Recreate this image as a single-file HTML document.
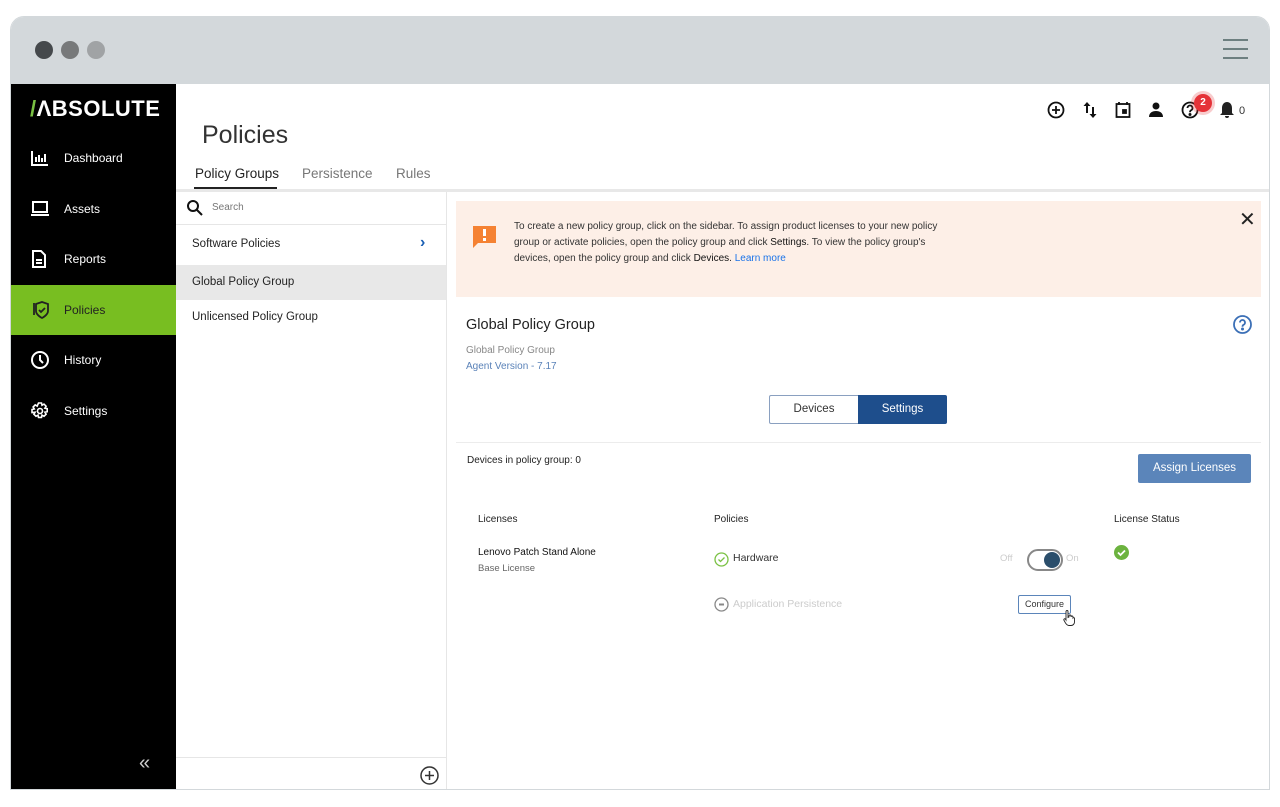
<!DOCTYPE html>
<html><head><meta charset="utf-8"><style>
*{box-sizing:border-box;margin:0;padding:0}
body{width:1280px;height:807px;background:#fff;font-family:"Liberation Sans",sans-serif;position:relative;overflow:hidden;color:#222}
.frame{position:absolute;left:10px;top:16px;width:1260px;height:774px;border:1px solid #d3d8db;border-radius:14px 14px 0 0;overflow:hidden;background:#fff}
.top{position:absolute;left:0;top:0;width:100%;height:67px;background:#d3d8db}
.dot{position:absolute;top:24px;width:18px;height:18px;border-radius:50%}
.ham{position:absolute;left:1212px;width:25px;height:2px;background:#6d7f80}
.side{position:absolute;left:0;top:67px;width:165px;height:707px;background:#000}
.logo{position:absolute;left:19px;top:12px;color:#fff;font-weight:bold;font-size:22px;letter-spacing:0.5px}
.logo b{color:#7ac143}
.nav{position:absolute;left:0;width:165px;height:50px;color:#fff;font-size:12px;display:flex;align-items:center}
.nav svg{position:absolute;left:20px}
.nav span{position:absolute;left:53px}
.nav.act{background:#78be21;color:#222}
.abs{position:absolute}
.s{font-size:11px}
</style></head><body>
<div class="frame">
<div class="top">
<div class="dot" style="left:24px;background:#45494c"></div>
<div class="dot" style="left:50px;background:#77797a"></div>
<div class="dot" style="left:76px;background:#a0a3a5"></div>
<div class="ham" style="top:22px"></div><div class="ham" style="top:31px"></div><div class="ham" style="top:40px"></div>
</div>
<div class="side">
<div class="logo"><b>/</b>ΛBSOLUTE</div>
<div class="nav" style="top:49px"><svg width="18" height="16" viewBox="0 0 18 16" fill="none" stroke="#fff" stroke-width="2"><path d="M1 1v14h16"/><path d="M5 12V7M8 12V5M11 12V8M14 12V4"/></svg><span>Dashboard</span></div>
<div class="nav" style="top:100px"><svg width="18" height="16" viewBox="0 0 18 16" fill="none" stroke="#fff" stroke-width="2"><rect x="2" y="1" width="14" height="10"/><path d="M0 14h18"/></svg><span>Assets</span></div>
<div class="nav" style="top:150px"><svg width="16" height="18" viewBox="0 0 16 18" fill="none" stroke="#fff" stroke-width="2"><path d="M2 1h8l4 4v12H2z"/><path d="M5 10h6M5 13h6"/></svg><span>Reports</span></div>
<div class="nav act" style="top:201px"><svg width="18" height="18" viewBox="0 0 18 18" fill="none" stroke="#222" stroke-width="1.8"><path d="M3 2v12M5 3l6-2 6 2v7c0 4-6 7-6 7s-6-3-6-7z"/><path d="M8 9l2 2 4-4"/></svg><span>Policies</span></div>
<div class="nav" style="top:251px"><svg width="18" height="18" viewBox="0 0 18 18" fill="none" stroke="#fff" stroke-width="2"><circle cx="9" cy="9" r="8"/><path d="M9 4v5l3 3"/></svg><span>History</span></div>
<div class="nav" style="top:302px"><svg width="18" height="18" viewBox="0 0 18 18" fill="none" stroke="#fff" stroke-width="1.6"><circle cx="9" cy="9" r="2.5"/><path d="M7.5 1h3l.5 2.3 2-1.2 2.1 2.1-1.2 2 2.3.5v3l-2.3.5 1.2 2-2.1 2.1-2-1.2-.5 2.3h-3l-.5-2.3-2 1.2-2.1-2.1 1.2-2L1 10.5v-3l2.3-.5-1.2-2 2.1-2.1 2 1.2z"/></svg><span>Settings</span></div>
<div class="abs" style="left:128px;top:668px;color:#ccc;font-size:20px">«</div>
</div>
<!-- header -->
<div class="abs" style="left:191px;top:104px;font-size:25px;color:#333">Policies</div>
<div class="abs" style="left:184px;top:149px;font-size:13.5px;color:#222">Policy Groups</div>
<div class="abs" style="left:183px;top:170px;width:83px;height:3px;background:#222"></div>
<div class="abs" style="left:291px;top:149px;font-size:13.5px;color:#777">Persistence</div>
<div class="abs" style="left:385px;top:149px;font-size:13.5px;color:#777">Rules</div>
<div class="abs" style="left:165px;top:172px;width:1095px;height:3px;background:#e8e8e8"></div>
<!-- top icons -->
<svg class="abs" style="left:1036px;top:84px" width="18" height="18" viewBox="0 0 18 18" fill="none" stroke="#111" stroke-width="1.8"><circle cx="9" cy="9" r="7.5"/><path d="M9 5v8M5 9h8"/></svg>
<svg class="abs" style="left:1072px;top:84px" width="14" height="18" viewBox="0 0 14 18" fill="#111"><path d="M4 1l-3.5 4h2.5v7h2V5h2.5z"/><path d="M10 17l3.5-4H11V6H9v7H6.5z"/></svg>
<svg class="abs" style="left:1104px;top:84px" width="16" height="18" viewBox="0 0 16 18" fill="none" stroke="#111" stroke-width="1.8"><rect x="1.5" y="3" width="13" height="13"/><path d="M4 1v3M12 1v3"/><rect x="8" y="9" width="3" height="3" fill="#111"/></svg>
<svg class="abs" style="left:1138px;top:85px" width="14" height="15" viewBox="0 0 14 15" fill="#111"><circle cx="7" cy="4" r="3.5"/><path d="M0 15c0-4 3-6 7-6s7 2 7 6z"/></svg>
<svg class="abs" style="left:1170px;top:84px" width="18" height="18" viewBox="0 0 18 18" fill="none" stroke="#111" stroke-width="1.8"><circle cx="9" cy="9" r="7.5"/><path d="M6.5 7a2.5 2.5 0 1 1 3.5 2.3c-1 .5-1 1-1 2"/><circle cx="9" cy="13.5" r=".6" fill="#111"/></svg>
<div class="abs" style="left:1183px;top:77px;width:18px;height:18px;border-radius:50%;background:#e53238;box-shadow:0 0 0 3px rgba(229,50,56,.25);color:#fff;font-size:10px;font-weight:bold;text-align:center;line-height:18px">2</div>
<svg class="abs" style="left:1208px;top:84px" width="16" height="18" viewBox="0 0 16 18" fill="#222"><path d="M8 1c3 0 5 2.5 5 6v5l2 2H1l2-2V7c0-3.5 2-6 5-6z"/><path d="M6 15h4a2 2 0 0 1-4 0z"/></svg>
<div class="abs s" style="left:1228px;top:88px;color:#333">0</div>
<!-- middle list -->
<div class="abs" style="left:435px;top:175px;width:1px;height:599px;background:#e6e6e6"></div>
<svg class="abs" style="left:175px;top:182px" width="17" height="17" viewBox="0 0 17 17" fill="none" stroke="#111" stroke-width="2"><circle cx="7" cy="7" r="5"/><path d="M11 11l5 5"/></svg>
<div class="abs" style="left:201px;top:185px;font-size:10px;color:#777">Search</div>
<div class="abs" style="left:165px;top:207px;width:270px;height:1px;background:#e6e6e6"></div>
<div class="abs s" style="left:181px;top:221px;font-size:11.5px">Software Policies</div>
<div class="abs" style="left:409px;top:217px;color:#1a5fb4;font-size:16px;font-weight:bold">›</div>
<div class="abs" style="left:165px;top:248px;width:270px;height:35px;background:#e8e8e8"></div>
<div class="abs" style="left:181px;top:259px;font-size:11.5px">Global Policy Group</div>
<div class="abs" style="left:181px;top:294px;font-size:11.5px">Unlicensed Policy Group</div>
<div class="abs" style="left:165px;top:740px;width:270px;height:1px;background:#e6e6e6"></div>
<svg class="abs" style="left:409px;top:749px" width="19" height="19" viewBox="0 0 19 19" fill="none" stroke="#333" stroke-width="1.5"><circle cx="9.5" cy="9.5" r="8.5"/><path d="M9.5 5v9M5 9.5h9"/></svg>
<!-- banner -->
<div class="abs" style="left:445px;top:184px;width:805px;height:96px;background:#fdefe7"></div>
<svg class="abs" style="left:461px;top:208px" width="25" height="25" viewBox="0 0 25 25"><path d="M1 1h23v17H6l-5 5z" fill="#f58233"/><rect x="11" y="4" width="3" height="7" fill="#fff"/><rect x="11" y="13" width="3" height="3" fill="#fff"/></svg>
<div class="abs" style="left:503px;top:202px;width:440px;font-size:10px;line-height:16px;color:#333">To create a new policy group, click on the sidebar. To assign product licenses to your new policy group or activate policies, open the policy group and click <b style="font-weight:normal;color:#111">Settings</b>. To view the policy group's devices, open the policy group and click <span style="color:#111">Devices</span>. <span style="color:#1a73e8">Learn more</span></div>
<div class="abs" style="left:1228px;top:190px;font-size:20px;color:#222">✕</div>
<div class="abs" style="left:455px;top:300px;font-size:14.5px;color:#222">Global Policy Group</div>
<svg class="abs" style="left:1222px;top:298px" width="19" height="19" viewBox="0 0 19 19" fill="none" stroke="#3b6fb6" stroke-width="1.8"><circle cx="9.5" cy="9.5" r="8.5"/><path d="M7 7.5a2.5 2.5 0 1 1 3.5 2.3c-1 .5-1 1-1 2"/><circle cx="9.5" cy="14" r=".6" fill="#3b6fb6"/></svg>
<div class="abs" style="left:455px;top:328px;font-size:10px;color:#888">Global Policy Group</div>
<div class="abs" style="left:455px;top:344px;font-size:10px;color:#5a82b8">Agent Version - 7.17</div>
<div class="abs" style="left:758px;top:378px;width:89px;height:29px;border:1px solid #8aa0c0;border-right:none;border-radius:2px 0 0 2px;font-size:11.5px;text-align:center;line-height:27px;color:#333">Devices</div>
<div class="abs" style="left:847px;top:378px;width:89px;height:29px;background:#1e4e8c;border-radius:0 2px 2px 0;font-size:11.5px;text-align:center;line-height:29px;color:#fff">Settings</div>
<div class="abs" style="left:445px;top:425px;width:805px;height:1px;background:#ececec"></div>
<div class="abs" style="left:456px;top:438px;font-size:10px;color:#222">Devices in policy group: 0</div>
<div class="abs" style="left:1127px;top:437px;width:113px;height:29px;background:#5b85ba;border-radius:2px;color:#fff;font-size:11.5px;text-align:center;line-height:29px">Assign Licenses</div>
<div class="abs" style="left:467px;top:497px;font-size:10px">Licenses</div>
<div class="abs" style="left:703px;top:497px;font-size:10px">Policies</div>
<div class="abs" style="left:1103px;top:497px;font-size:10px">License Status</div>
<div class="abs" style="left:467px;top:530px;font-size:10px;color:#111">Lenovo Patch Stand Alone</div>
<div class="abs" style="left:467px;top:546px;font-size:9.5px;color:#666">Base License</div>
<svg class="abs" style="left:703px;top:535px" width="15" height="15" viewBox="0 0 15 15" fill="none" stroke="#7ac143" stroke-width="1.3"><circle cx="7.5" cy="7.5" r="6.5"/><path d="M4.5 7.5l2 2 4-4"/></svg>
<div class="abs" style="left:722px;top:535px;font-size:10.5px;color:#333">Hardware</div>
<div class="abs" style="left:989px;top:536px;font-size:9.5px;color:#ccc">Off</div>
<div class="abs" style="left:1016px;top:532px;width:36px;height:22px;border:2px solid #888;border-radius:11px"></div>
<div class="abs" style="left:1033px;top:535px;width:16px;height:16px;border-radius:50%;background:#2b4e6b"></div>
<div class="abs" style="left:1055px;top:536px;font-size:9.5px;color:#ccc">On</div>
<svg class="abs" style="left:1103px;top:528px" width="15" height="15" viewBox="0 0 15 15"><circle cx="7.5" cy="7.5" r="7.5" fill="#6cb33f"/><path d="M4 7.5l2.5 2.5 4.5-4.5" stroke="#fff" stroke-width="1.8" fill="none"/></svg>
<svg class="abs" style="left:703px;top:580px" width="15" height="15" viewBox="0 0 15 15" fill="none" stroke="#888" stroke-width="1.3"><circle cx="7.5" cy="7.5" r="6.5"/><path d="M5 7.5h5" stroke-width="2"/></svg>
<div class="abs" style="left:722px;top:581px;font-size:10.5px;color:#ccc">Application Persistence</div>
<div class="abs" style="left:1007px;top:578px;width:53px;height:19px;border:1px solid #5b85ba;border-radius:2px;font-size:9px;text-align:center;line-height:17px;color:#333">Configure</div>
<svg class="abs" style="left:1052px;top:593px" width="12" height="16" viewBox="0 0 12 16" fill="#fff" stroke="#222" stroke-width="0.9"><path d="M3 1.5a1 1 0 0 1 2 0v6l1-.5v-1a1 1 0 0 1 2 0v1a1 1 0 0 1 2 0v1a1 1 0 0 1 1.5 0V12c0 2-1.5 3.5-3.5 3.5H6c-1.5 0-2.5-1-3.5-2.5L.8 10a1 1 0 0 1 1.6-1L3 10z"/></svg>
</div>
</body></html>
